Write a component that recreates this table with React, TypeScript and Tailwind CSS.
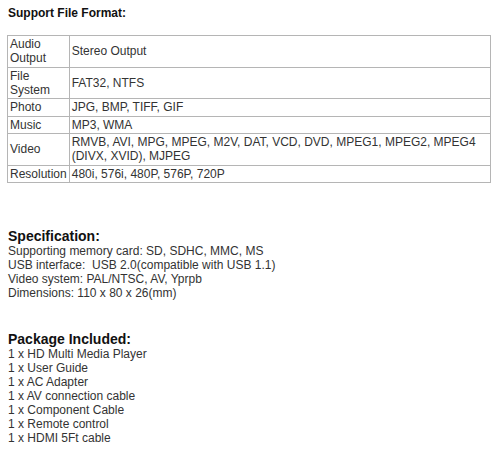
const formats: [string, string][] = [
  ["Audio Output", "Stereo Output"],
  ["File System", "FAT32, NTFS"],
  ["Photo", "JPG, BMP, TIFF, GIF"],
  ["Music", "MP3, WMA"],
  ["Video", "RMVB, AVI, MPG, MPEG, M2V, DAT, VCD, DVD, MPEG1, MPEG2, MPEG4 (DIVX, XVID), MJPEG"],
  ["Resolution", "480i, 576i, 480P, 576P, 720P"],
];

const specs = [
  "Supporting memory card: SD, SDHC, MMC, MS",
  "USB interface:\u00a0 USB 2.0(compatible with USB 1.1)",
  "Video system: PAL/NTSC, AV, Yprpb",
  "Dimensions: 110 x 80 x 26(mm)",
];

const pkg = [
  "1 x HD Multi Media Player",
  "1 x User Guide",
  "1 x AC Adapter",
  "1 x AV connection cable",
  "1 x Component Cable",
  "1 x Remote control",
  "1 x HDMI 5Ft cable",
];

export default function App() {
  return (
    <div className="w-[500px] h-[450px] bg-white px-[8px] pt-[6px] text-[12px] leading-[14px] text-[#333] font-['Liberation_Sans',Arial,sans-serif]">
      <h2 className="font-bold text-[12px] leading-[14px] text-[#111]">Support File Format:</h2>
      <table className="mt-[15px] -ml-px w-[484px] border-collapse border border-[#b5b5b5]">
        <tbody>
          {formats.map(([k, v]) => (
            <tr key={k}>
              <td className="w-[61px] border border-[#b5b5b5] px-[2px] pt-px pb-[1.5px] align-middle">{k}</td>
              <td className="border border-[#b5b5b5] px-[2px] pt-px pb-[1.5px] align-middle">{v}</td>
            </tr>
          ))}
        </tbody>
      </table>

      <h2 className="mt-[45px] font-bold text-[14px] leading-[16px] text-[#111]">Specification:</h2>
      {specs.map((s) => (
        <p key={s}>{s}</p>
      ))}

      <h2 className="mt-[31px] font-bold text-[14px] leading-[16px] text-[#111]">Package Included:</h2>
      {pkg.map((s) => (
        <p key={s}>{s}</p>
      ))}
    </div>
  );
}
